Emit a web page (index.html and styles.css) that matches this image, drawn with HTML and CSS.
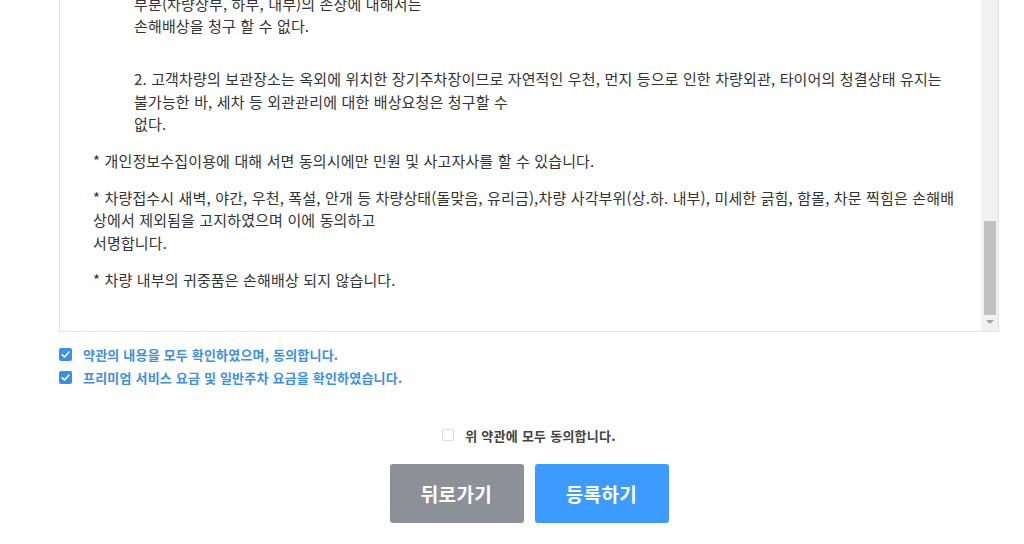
FILE: index.html
```html
<!DOCTYPE html>
<html lang="ko">
<head>
<meta charset="utf-8">
<title>약관 동의</title>
<link rel="stylesheet" href="styles.css">
</head>
<body>
<div class="page">
  <div class="terms">
    <div class="terms-text">
      <p class="indent gap-lg">부분(차량상부, 하부, 내부)의 손상에 대해서는<br>손해배상을 청구 할 수 없다.</p>
      <p class="indent">2. 고객차량의 보관장소는 옥외에 위치한 장기주차장이므로 자연적인 우천, 먼지 등으로 인한 차량외관, 타이어의 청결상태 유지는<br>불가능한 바, 세차 등 외관관리에 대한 배상요청은 청구할 수<br>없다.</p>
      <p>* 개인정보수집이용에 대해 서면 동의시에만 민원 및 사고자사를 할 수 있습니다.</p>
      <p>* 차량접수시 새벽, 야간, 우천, 폭설, 안개 등 차량상태(돌맞음, 유리금),차량 사각부위(상.하. 내부), 미세한 긁힘, 함몰, 차문 찍힘은 손해배<br>상에서 제외됨을 고지하였으며 이에 동의하고<br>서명합니다.</p>
      <p>* 차량 내부의 귀중품은 손해배상 되지 않습니다.</p>
    </div>
    <div class="scrollbar">
      <div class="sb-track"><div class="sb-thumb"></div></div>
      <div class="sb-arrow"></div>
    </div>
  </div>

  <div class="checks">
    <label class="check-row"><span class="cb cb-on"><svg viewBox="0 0 13 13" width="13" height="13"><path d="M3.2 6.8 L5.5 9 L9.8 4.2" fill="none" stroke="#fff" stroke-width="1.6" stroke-linecap="round" stroke-linejoin="round"/></svg></span><span class="check-label">약관의 내용을 모두 확인하였으며, 동의합니다.</span></label>
    <label class="check-row"><span class="cb cb-on"><svg viewBox="0 0 13 13" width="13" height="13"><path d="M3.2 6.8 L5.5 9 L9.8 4.2" fill="none" stroke="#fff" stroke-width="1.6" stroke-linecap="round" stroke-linejoin="round"/></svg></span><span class="check-label">프리미엄 서비스 요금 및 일반주차 요금을 확인하였습니다.</span></label>
  </div>

  <div class="agree-all">
    <span class="cb cb-off"></span><span class="agree-label">위 약관에 모두 동의합니다.</span>
  </div>

  <div class="buttons">
    <button class="btn btn-back" type="button">뒤로가기</button>
    <button class="btn btn-submit" type="button">등록하기</button>
  </div>
</div>
</body>
</html>
```

FILE: styles.css
```css
html, body {
  margin: 0;
  padding: 0;
  background: #fff;
}

body {
  font-family: "Noto Sans CJK KR", "Noto Sans", sans-serif;
  color: #333;
  overflow: hidden;
}

.page {
  width: 940px;
  margin-left: 59px;
}

.terms {
  display: flex;
  height: 332px;
  border: 1px solid #e3e3e3;
  border-top: none;
  box-sizing: border-box;
  overflow: hidden;
}

.terms-text {
  flex: 1;
  padding: 0 10px 0 33px;
  margin-top: -7.5px;
  font-size: 15px;
  letter-spacing: 0.15px;
  line-height: 22.4px;
  color: #333;
}

.terms-text p {
  margin: 0 0 14.5px;
}

.terms-text p.indent {
  padding-left: 41px;
}

.terms-text p.gap-lg {
  margin-bottom: 31px;
}

.scrollbar {
  width: 17px;
  background: #f1f1f1;
  display: flex;
  flex-direction: column;
}

.sb-track {
  flex: 1;
  padding: 221px 2px 0 3px;
}

.sb-thumb {
  height: 94px;
  background: #c1c1c1;
}

.sb-arrow {
  height: 17px;
  display: flex;
  align-items: center;
  justify-content: center;
}

.sb-arrow::before {
  content: "";
  border-left: 4px solid transparent;
  border-right: 4px solid transparent;
  border-top: 4px solid #a3a3a3;
  margin-top: -2px;
}

.checks {
  padding-top: 11px;
  display: flex;
  flex-direction: column;
}

.check-row {
  display: flex;
  align-items: center;
  height: 23px;
}

.cb {
  width: 13px;
  height: 13px;
  box-sizing: border-box;
  border-radius: 2px;
  flex: none;
}

.cb-on {
  background: #3c8fe6;
  display: flex;
}

.cb-off {
  background: #fff;
  border: 1px solid #dcdcdc;
  width: 12px;
  height: 12px;
}

.check-label {
  margin-left: 11px;
  font-size: 13px;
  font-weight: 700;
  letter-spacing: 0.2px;
  color: #3d8fe0;
}

.agree-all {
  margin-top: 35px;
  display: flex;
  justify-content: center;
  align-items: center;
  height: 22px;
}

.agree-label {
  margin-left: 11px;
  font-size: 13px;
  font-weight: 700;
  letter-spacing: 0.25px;
  color: #444;
}

.buttons {
  margin-top: 18px;
  display: flex;
  justify-content: center;
  gap: 11px;
}

.btn {
  width: 134px;
  height: 59px;
  border: none;
  border-radius: 3px;
  font-family: "Noto Sans CJK KR", "Noto Sans", sans-serif;
  font-size: 19px;
  font-weight: 700;
  letter-spacing: 0.4px;
  color: #fff;
  padding: 0;
}

.btn-back {
  background: #8e9098;
}

.btn-submit {
  background: #3d9bff;
}
```
